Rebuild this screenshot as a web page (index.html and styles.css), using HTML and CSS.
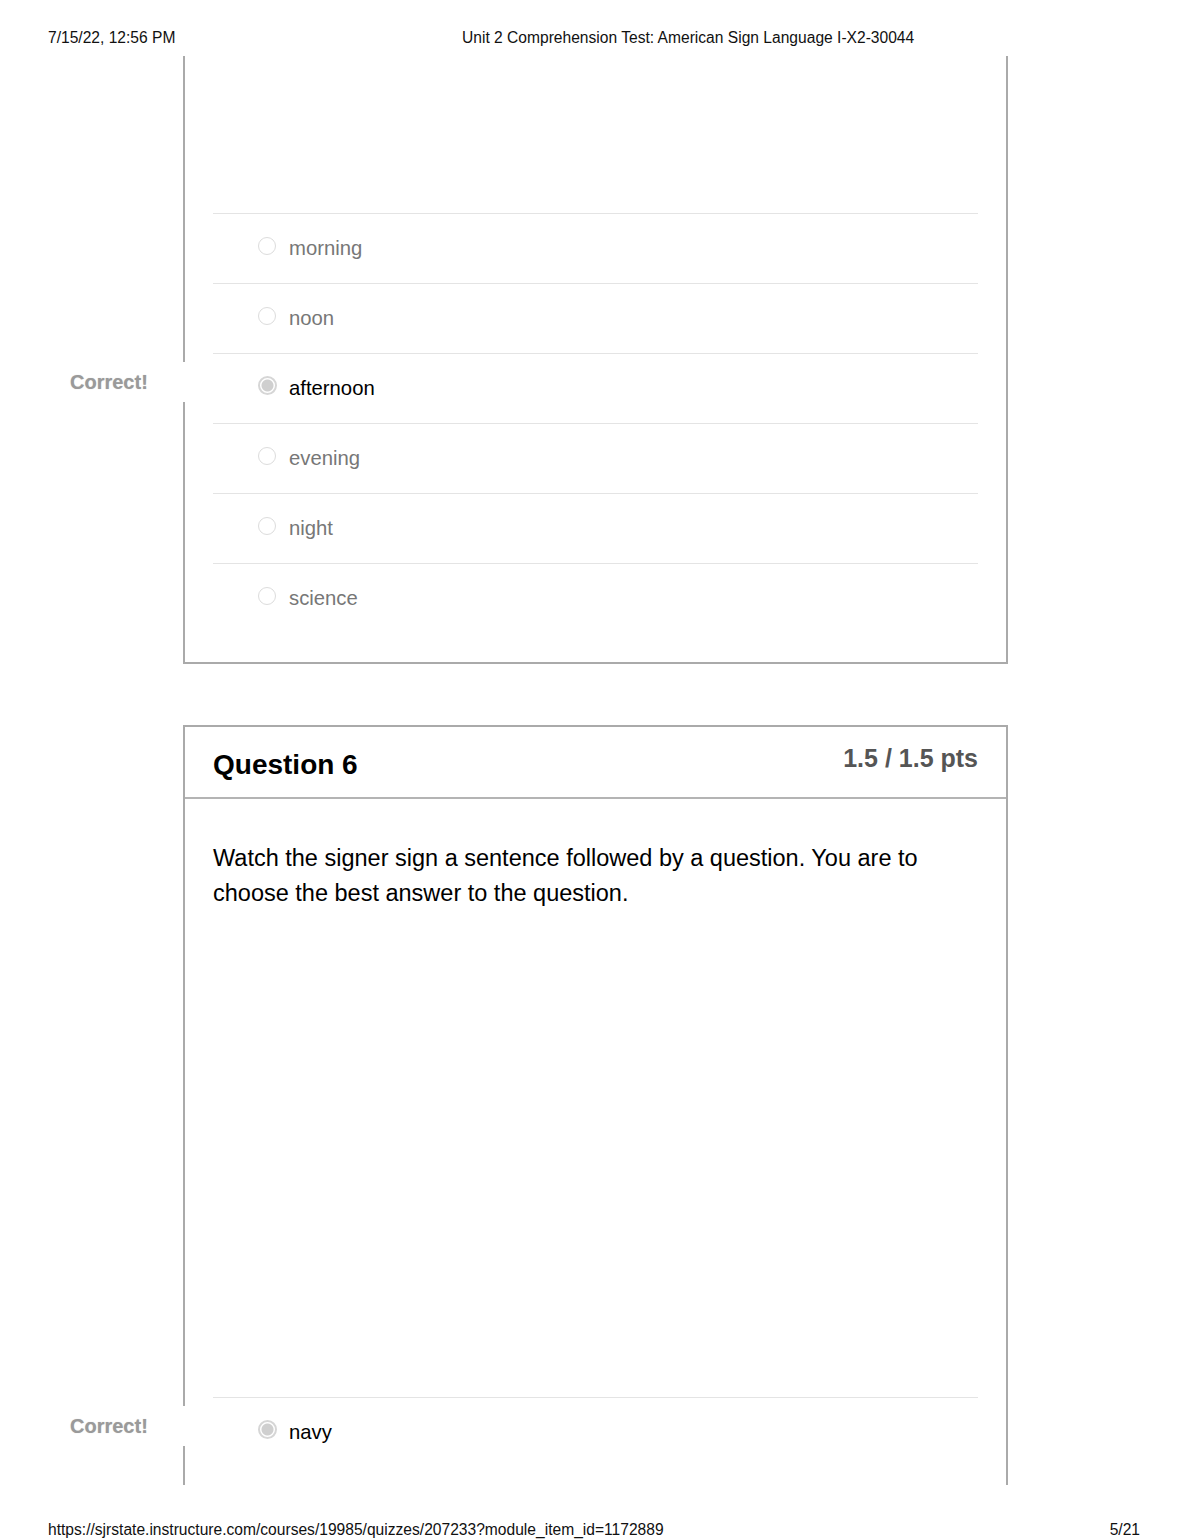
FILE: index.html
```html
<!DOCTYPE html>
<html lang="en">
<head>
  <meta charset="UTF-8" />
  <title>Unit 2 Comprehension Test: American Sign Language I-X2-30044</title>
  <link rel="stylesheet" href="styles.css">
</head>
<body>

  <header class="print-head">
    <span class="print-date">7/15/22, 12:56 PM</span>
    <span class="print-title">Unit 2 Comprehension Test: American Sign Language I-X2-30044</span>
  </header>

  <main class="sheet">

    <!-- Question 5 (continued from previous page) -->
    <div class="question question-cont">
      <div class="media-space q5-media"></div>
      <div class="answers">
        <div class="answer"><span class="radio"></span>morning</div>
        <div class="answer"><span class="radio"></span>noon</div>
        <div class="answer selected">
          <span class="flag">Correct!</span>
          <span class="radio"></span>afternoon
        </div>
        <div class="answer"><span class="radio"></span>evening</div>
        <div class="answer"><span class="radio"></span>night</div>
        <div class="answer"><span class="radio"></span>science</div>
      </div>
    </div>

    <!-- Question 6 (runs on to next page) -->
    <div class="question question-open">
      <div class="question-head">
        <h2>Question 6</h2>
        <span class="points">1.5 / 1.5 pts</span>
      </div>
      <div class="question-body">
        <p>Watch the signer sign a sentence followed by a question. You are to choose the best answer to the question.</p>
      </div>
      <div class="media-space q6-media"></div>
      <div class="answers">
        <div class="answer selected">
          <span class="flag">Correct!</span>
          <span class="radio"></span>navy
        </div>
      </div>
    </div>

  </main>

  <footer class="print-foot">
    <span>https://sjrstate.instructure.com/courses/19985/quizzes/207233?module_item_id=1172889</span>
    <span>5/21</span>
  </footer>

</body>
</html>
```

FILE: styles.css
```css
body {
  margin: 0;
  padding: 0;
  background: #fff;
  color: #000;
  font-family: "Liberation Sans", Arial, sans-serif;
}

/* print header / footer */
.print-head {
  height: 56px;
  box-sizing: border-box;
  padding: 29px 48px 0;
  display: flex;
  font-size: 15.6px;
  line-height: 18px;
  color: #111;
}

.print-date {
  width: 414px;
}

.print-foot {
  display: flex;
  justify-content: space-between;
  padding: 36px 50px 0 48px;
  font-size: 15.6px;
  line-height: 18px;
  color: #111;
}

/* clipped page area */
.sheet {
  height: 1429px;
  overflow: hidden;
  padding-left: 183px;
}

.question {
  width: 825px;
  box-sizing: border-box;
  border: 2px solid #aaa;
  margin-bottom: 61px;
}

.question-cont {
  border-top: none;
  padding-bottom: 29px;
}

.question-open {
  padding-bottom: 120px;
}

.q5-media {
  height: 157px;
}

.q6-media {
  height: 486px;
}

.question-head {
  display: flex;
  justify-content: space-between;
  align-items: flex-start;
  height: 70px;
  padding: 0 28px;
  border-bottom: 2px solid #b4b4b4;
}

.question-head h2 {
  margin: 22px 0 0;
  font-size: 28px;
  line-height: 32px;
  font-weight: bold;
}

.points {
  margin-top: 16px;
  font-size: 25px;
  line-height: 30px;
  font-weight: bold;
  color: #555;
}

.question-body {
  padding: 42px 28px 0;
}

.question-body p {
  margin: 0;
  font-size: 23.5px;
  line-height: 35px;
}

/* answers */
.answers {
  padding: 0 28px;
}

.answer {
  position: relative;
  display: flex;
  align-items: center;
  height: 70px;
  box-sizing: border-box;
  border-top: 1px solid #e4e4e4;
  padding-left: 45px;
  font-size: 20.3px;
  color: #777;
}

.answer.selected {
  color: #000;
}

.radio {
  width: 16px;
  height: 16px;
  border: 1px solid #dcdcdc;
  border-radius: 50%;
  margin: -6px 13px 0 0;
  box-sizing: content-box;
}

.selected .radio {
  border: 2px solid #d6d6d6;
  width: 15px;
  height: 15px;
  margin-right: 12px;
  background: radial-gradient(circle, #cfcfcf 0 5.5px, #fff 6.5px);
}

.flag {
  position: absolute;
  left: -143px;
  top: 8px;
  width: 130px;
  height: 40px;
  line-height: 40px;
  background: #fff;
  font-size: 20px;
  font-weight: bold;
  color: #9a9a9a;
  text-shadow: 0 0 1px #c8c8c8;
}
```
